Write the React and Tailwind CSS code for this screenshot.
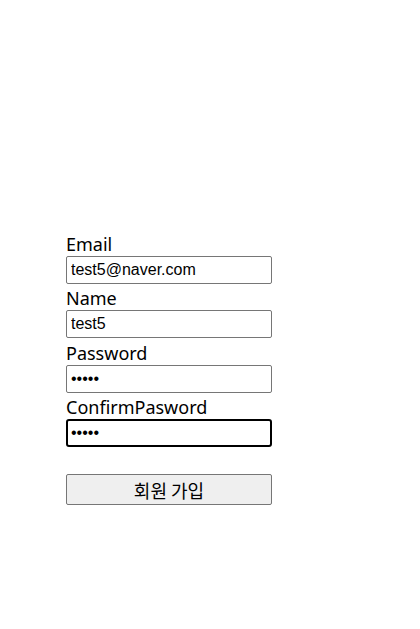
import { useState } from 'react';

function Field({ label, type, value, onChange, focused }) {
  return (
    <div className="flex flex-col">
      <label className="h-[26.5px] text-[18px] leading-[26px] text-black pt-[1.5px]">
        {label}
      </label>
      <input
        type={type}
        value={value}
        onChange={(e) => onChange(e.target.value)}
        className={
          focused
            ? 'h-[28px] w-[206px] rounded-[3px] border-2 border-black px-[3px] text-[16px] outline-none font-["Liberation_Sans",Arial,sans-serif]'
            : 'h-[28px] w-[206px] rounded-[2px] border border-[#767676] px-[4px] text-[16px] outline-none font-["Liberation_Sans",Arial,sans-serif]'
        }
      />
    </div>
  );
}

export default function App() {
  const [email, setEmail] = useState('test5@naver.com');
  const [name, setName] = useState('test5');
  const [pw, setPw] = useState('12345');
  const [pw2, setPw2] = useState('12345');

  return (
    <div className='min-h-[629px] w-[420px] bg-white font-["Noto_Sans","Noto_Sans_CJK_KR",sans-serif]'>
      <form className="flex flex-col pl-[66px] pt-[229px]" onSubmit={(e) => e.preventDefault()}>
        <Field label="Email" type="text" value={email} onChange={setEmail} />
        <Field label="Name" type="text" value={name} onChange={setName} />
        <Field label="Password" type="password" value={pw} onChange={setPw} />
        <Field label="ConfirmPasword" type="password" value={pw2} onChange={setPw2} focused />
        <button
          type="submit"
          className='mt-[27px] h-[31px] w-[206px] rounded-[2px] border border-[#767676] bg-[#efefef] text-[18px] leading-none text-black font-["Noto_Sans_CJK_KR","Noto_Sans",sans-serif]'
        >
          회원 가입
        </button>
      </form>
    </div>
  );
}
